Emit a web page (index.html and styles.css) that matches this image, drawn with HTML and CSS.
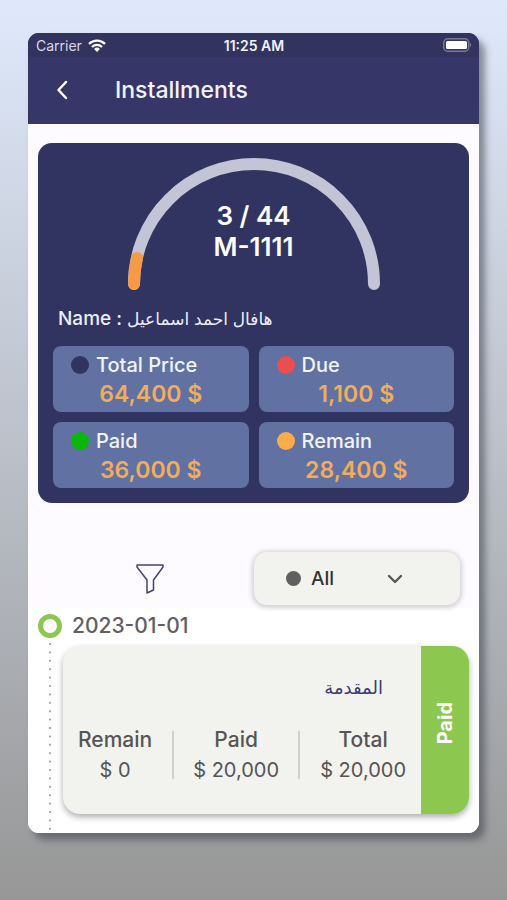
FILE: index.html
```html
<!DOCTYPE html>
<html lang="en">
<head>
<meta charset="utf-8">
<meta name="viewport" content="width=device-width, initial-scale=1">
<title>Installments</title>
<link rel="stylesheet" href="styles.css">
</head>
<body>
<div class="phone">
  <header class="top">
    <div class="status">
      <span class="carrier">Carrier
        <svg class="wifi" viewBox="0 0 18 13" aria-hidden="true"><g fill="none" stroke="#fff" stroke-width="2.3"><path d="M1 4.900a11.400 11.400 0 0 1 16 0"/><path d="M4 8a7.100 7.100 0 0 1 10 0"/></g><path fill="#fff" d="M6.100 10a4.200 4.200 0 0 1 5.800 0L9 13z"/></svg>
      </span>
      <span class="clock">11:25 AM</span>
      <svg class="battery" viewBox="0 0 30 14" aria-hidden="true"><rect x="1.750" y=".75" width="25" height="12.500" rx="4" fill="none" stroke="#77799a" stroke-width="1.500"/><rect x="4" y="3" width="21" height="8" rx="1.500" fill="#fff"/><path fill="#77799a" d="M28 5c1.500 .6 1.500 3.400 0 4z"/></svg>
    </div>
    <div class="bar">
      <button class="back" type="button" aria-label="Back"><svg viewBox="0 0 12 20" aria-hidden="true"><path d="M10 2 2.500 10 10 18" fill="none" stroke="#fff" stroke-width="2.500" stroke-linecap="round" stroke-linejoin="round"/></svg></button>
      <h1>Installments</h1>
    </div>
  </header>
  <main>
    <section class="summary">
      <div class="gauge">
        <svg viewBox="0 0 254 134" aria-hidden="true"><g fill="none" stroke-width="12" stroke-linecap="round"><path stroke="#c3c4d5" d="M7 127a120 120 0 0 1 240 0"/><path stroke="#f79a48" d="M7 127a120 120 0 0 1 3 -26"/></g></svg>
        <p class="count">3 / 44<br>M-1111</p>
      </div>
      <p class="name">Name : <bdi lang="ar">هافال احمد اسماعيل</bdi></p>
      <div class="tiles">
        <div class="tile"><h2><i class="dot navy"></i>Total Price</h2><p>64,400 $</p></div>
        <div class="tile"><h2><i class="dot red"></i>Due</h2><p>1,100 $</p></div>
        <div class="tile"><h2><i class="dot green"></i>Paid</h2><p>36,000 $</p></div>
        <div class="tile"><h2><i class="dot orange"></i>Remain</h2><p>28,400 $</p></div>
      </div>
    </section>
    <div class="filters">
      <button class="funnel" type="button" aria-label="Filter"><svg viewBox="0 0 28 30" aria-hidden="true"><path d="M1 1h26v2L17.500 16v10L11 29V16L1 3z" fill="none" stroke="#47436f" stroke-width="1.500" stroke-linejoin="round"/></svg></button>
      <label class="picker">
        <i class="dot gray"></i>
        <select aria-label="Status"><option>All</option></select>
        <svg class="chevron" viewBox="0 0 16 10" aria-hidden="true"><path d="M2 2l6 6 6-6" fill="none" stroke="#555" stroke-width="2.400" stroke-linecap="round" stroke-linejoin="round"/></svg>
      </label>
    </div>
    <section class="timeline">
      <svg class="rail" aria-hidden="true"><line x1="12" y1="4" x2="12" y2="100%" stroke="#aaa" stroke-width="2" stroke-dasharray="2 6.400"/></svg>
      <h2 class="date"><i class="ring"></i>2023-01-01</h2>
      <article class="entry">
        <div class="body">
          <h3 lang="ar" dir="rtl">المقدمة</h3>
          <dl>
            <div><dt>Remain</dt><dd>$ 0</dd></div>
            <div class="mid"><dt>Paid</dt><dd>$ 20,000</dd></div>
            <div><dt>Total</dt><dd>$ 20,000</dd></div>
          </dl>
        </div>
        <div class="strip">Paid</div>
      </article>
    </section>
  </main>
</div>
</body>
</html>
```
FILE: styles.css
```css
* { box-sizing: border-box; }
html { min-height: 100%; background: linear-gradient(#dfe9fb, #979797); }
body { margin: 0; padding: 33px 28px; font-family: Inter, "DejaVu Sans", sans-serif; }
h1, h2, h3, p, dl, dd { margin: 0; font-weight: 500; }
button { padding: 0; border: 0; background: none; }
svg { display: block; }

.phone { border-radius: 11px; overflow: hidden; background: #fff; box-shadow: 6px 7px 7px rgba(60, 65, 75, .55); }

.top { background: #373668; color: #f2f2fb; padding-bottom: 8px; }
.status { display: grid; grid-template-columns: 1fr auto 1fr; align-items: center; height: 24px; padding: 0 7px 0 8px; background: #33335f; font-size: 14px; }
.carrier { display: flex; align-items: center; gap: 6px; color: #d8d9ea; }
.wifi { width: 18px; height: 13px; }
.clock { font-size: 14px; font-weight: 600; }
.battery { width: 30px; height: 14px; justify-self: end; }
.bar { display: flex; align-items: center; height: 59px; padding: 11px 0 5px 24px; }
.back { display: grid; place-items: center; width: 20px; height: 40px; margin-right: 43px; }
.back svg { width: 12px; height: 20px; }
h1 { font-size: 23px; }

main { background: linear-gradient(#fdfbff 484px, #fff 484px); }
main::before { content: ""; display: block; height: 19px; }
.summary { margin: 0 10px; padding: 14px 15px 15px; border-radius: 14px; background: #313460; color: #fff; }
.gauge { position: relative; width: 254px; margin: 0 auto; }
.gauge svg { width: 100%; }
.count { position: absolute; inset: 43px 0 auto; text-align: center; font-size: 26px; line-height: 31px; font-weight: 600; }
.name { padding-left: 5px; margin: 13px 0 13px; height: 29px; line-height: 29px; font-size: 19px; color: #eceefa; }
.name bdi { font-size: 17px; font-weight: 400; }
.tiles { display: grid; grid-template-columns: 1fr 1fr; gap: 10px; }
.tile { height: 66px; padding: 5px 0 0 18px; border-radius: 8px; background: #6171a2; }
.tile h2 { display: flex; align-items: center; gap: 7px; font-size: 20px; line-height: 28px; color: #f0f4ff; }
.tile p { padding-right: 18px; text-align: center; font-size: 23px; line-height: 30px; font-weight: 600; color: #f0ad5c; }
.dot { flex: none; width: 18px; height: 18px; border-radius: 50%; }
.navy { background: #313460; }
.red { background: #e94f4f; }
.green { background: #08b808; }
.orange { background: #ffab49; }
.gray { width: 15px; height: 15px; background: #606060; }

.filters { display: flex; align-items: center; margin: 49px 19px 0 10px; }
.funnel { display: grid; flex: 1; justify-items: center; }
.funnel svg { width: 28px; height: 30px; margin-left: 8px; }
.picker { position: relative; display: flex; align-items: center; width: 206px; height: 53px; border-radius: 13px; background: #f2f2ee; box-shadow: 0 1px 5px 2px rgba(0, 0, 0, .17); }
.picker .dot { position: absolute; left: 32px; pointer-events: none; }
.picker select { appearance: none; width: 100%; height: 100%; padding: 0 0 0 57px; border: 0; border-radius: 13px; background: transparent; color: #333; font: 500 19px Inter, sans-serif; }
.chevron { position: absolute; right: 57px; width: 16px; height: 10px; pointer-events: none; }

.timeline { position: relative; padding: 7px 10px 19px; }
.rail { position: absolute; left: 10px; top: 34px; width: 24px; height: calc(100% - 34px); }
.date { display: flex; align-items: center; gap: 10px; height: 27px; font-size: 21px; color: #606060; }
.ring { width: 24px; height: 24px; border: 5px solid #8cc751; border-radius: 50%; background: #fff; }
.entry { display: flex; margin: 7px 0 0 25px; border-radius: 17px; background: #f2f2ee; box-shadow: 0 3px 6px rgba(0, 0, 0, .32); }
.body { flex: 1; padding: 26px 15px 28px; }
h3 { padding-right: 23px; font-size: 18px; line-height: 32px; font-weight: 400; color: #3e3a76; }
dl { display: flex; justify-content: space-between; margin-top: 20px; text-align: center; font-size: 21px; line-height: 31px; color: #555; }
dd { font-size: 20px; font-weight: 400; }
.mid { display: flex; flex-direction: column; position: relative; }
.mid::before, .mid::after { content: ""; position: absolute; top: 7px; bottom: 7px; width: 2px; background: #d0d0cd; }
.mid::before { left: -21px; }
.mid::after { right: -21px; }
.strip { display: grid; place-items: center; width: 48px; padding-bottom: 14px; border-radius: 0 17px 17px 0; background: #8cc84f; color: #fff; font-size: 20px; font-weight: 700; writing-mode: sideways-lr; }
```
